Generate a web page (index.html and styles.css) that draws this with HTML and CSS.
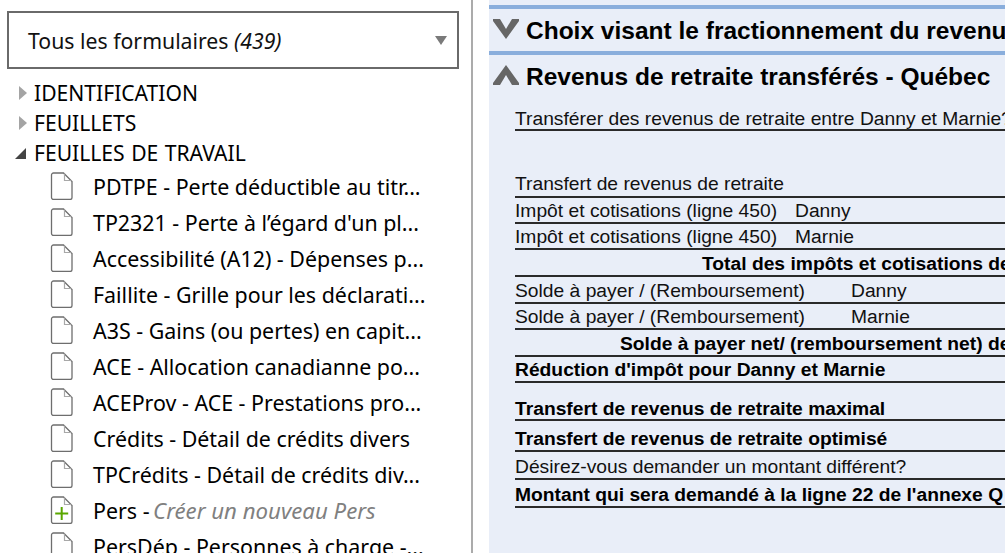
FILE: index.html
```html
<!DOCTYPE html>
<html lang="fr">
<head>
<meta charset="utf-8">
<title>Formulaires</title>
<link rel="stylesheet" href="styles.css">
</head>
<body>
<svg class="defs" width="0" height="0" aria-hidden="true">
  <symbol id="doc" viewBox="0 0 23 28">
    <path d="M1.500 3a2 2 0 0 1 2-2H13.500l8.500 8.500V25.500a2 2 0 0 1-2 2H3.500a2 2 0 0 1-2-2z" fill="#fff" stroke="#6e6e6e" stroke-width="1.3"/>
    <path d="M14.500 1.500V8.500H21.500" fill="none" stroke="#a8a8a8" stroke-width="1.2"/>
  </symbol>
</svg>
<div class="app">
  <aside class="side">
    <div class="select">
      <span>Tous les formulaires <em>(439)</em></span>
      <span class="select-arrow"></span>
    </div>
    <ul class="tree">
      <li class="group"><span class="tri tri-closed"></span>IDENTIFICATION</li>
      <li class="group"><span class="tri tri-closed"></span>FEUILLETS</li>
      <li class="group"><span class="tri tri-open"></span>FEUILLES DE TRAVAIL</li>
    </ul>
    <ul class="forms">
      <li class="form"><svg class="doc"><use href="#doc"/></svg><span>PDTPE - Perte déductible au titr...</span></li>
      <li class="form"><svg class="doc"><use href="#doc"/></svg><span>TP2321 - Perte à l’égard d'un pl...</span></li>
      <li class="form"><svg class="doc"><use href="#doc"/></svg><span>Accessibilité (A12) - Dépenses p...</span></li>
      <li class="form"><svg class="doc"><use href="#doc"/></svg><span>Faillite - Grille pour les déclarati...</span></li>
      <li class="form"><svg class="doc"><use href="#doc"/></svg><span>A3S - Gains (ou pertes) en capit...</span></li>
      <li class="form"><svg class="doc"><use href="#doc"/></svg><span>ACE - Allocation canadianne po...</span></li>
      <li class="form"><svg class="doc"><use href="#doc"/></svg><span>ACEProv - ACE - Prestations pro...</span></li>
      <li class="form"><svg class="doc"><use href="#doc"/></svg><span>Crédits - Détail de crédits divers</span></li>
      <li class="form"><svg class="doc"><use href="#doc"/></svg><span>TPCrédits - Détail de crédits div...</span></li>
      <li class="form"><svg class="doc" viewBox="0 0 23 28"><use href="#doc" width="23" height="28"/><path d="M11.700 11V24M5.200 17.500H18.200" stroke="#5aa700" stroke-width="2" fill="none"/></svg><span>Pers - <em class="new">Créer un nouveau Pers</em></span></li>
      <li class="form"><svg class="doc"><use href="#doc"/></svg><span>PersDép - Personnes à charge -...</span></li>
    </ul>
  </aside>
  <main class="main">
    <div class="panel">
      <h2 class="head head-first"><svg class="chev" viewBox="0 0 26 20"><path d="M0 0H7L13 10 19 0H26V2L13 20 0 2Z" fill="#666"/></svg>Choix visant le fractionnement du revenu de pension</h2>
      <h2 class="head"><svg class="chev" viewBox="0 0 26 20"><path d="M0 20V18L13 0 26 18V20H19L13 10 7 20Z" fill="#666"/></svg>Revenus de retraite transférés - Québec</h2>
      <div class="rows">
        <div class="row r1">Transférer des revenus de retraite entre Danny et Marnie?</div>
        <div class="row r2">Transfert de revenus de retraite</div>
        <div class="row"><span class="lbl-a">Impôt et cotisations (ligne 450)</span>Danny</div>
        <div class="row"><span class="lbl-a">Impôt et cotisations (ligne 450)</span>Marnie</div>
        <div class="row b tall c1">Total des impôts et cotisations de Danny et Marnie</div>
        <div class="row tall"><span class="lbl-b">Solde à payer / (Remboursement)</span>Danny</div>
        <div class="row"><span class="lbl-b">Solde à payer / (Remboursement)</span>Marnie</div>
        <div class="row b tall c2">Solde à payer net/ (remboursement net) de Danny et Marnie</div>
        <div class="row b">Réduction d'impôt pour Danny et Marnie</div>
        <div class="row b r3">Transfert de revenus de retraite maximal</div>
        <div class="row b r4">Transfert de revenus de retraite optimisé</div>
        <div class="row taller">Désirez-vous demander un montant différent?</div>
        <div class="row b taller">Montant qui sera demandé à la ligne 22 de l'annexe Q</div>
      </div>
    </div>
  </main>
</div>
</body>
</html>
```
FILE: styles.css
```css
* { box-sizing: border-box; }
html, body { margin: 0; height: 100%; overflow: hidden; background: #fff; }
ul { list-style: none; margin: 0; padding: 0; }
.defs { position: absolute; }
.app { display: flex; width: 1005px; height: 553px; overflow: hidden; }
.side {
  width: 473px; flex: none; padding: 11px 0 0 7px;
  border-right: 2px solid #ababab;
  font-family: "Noto Sans", sans-serif; font-size: 21.4px; color: #000;
  overflow: hidden;
}
.select {
  display: flex; align-items: center; justify-content: space-between;
  height: 58px; width: 452px; padding: 0 10px 0 19px;
  border: 2px solid #6a6a6a; color: #111; font-size: 21.25px;
}
.select-arrow {
  width: 0; height: 0; border-left: 6px solid transparent; border-right: 6px solid transparent;
  border-top: 9px solid #7a7a7a;
}
.tree { margin-top: 9px; padding-left: 27px; font-size: 21.1px; word-spacing: 1px; }
.group { position: relative; height: 30px; line-height: 30px; }
.tri { position: absolute; left: -15px; top: 8px; width: 0; height: 0; }
.tri-closed { border-left: 8px solid #a4a4a4; border-top: 7px solid transparent; border-bottom: 7px solid transparent; }
.tri-open { left: -19px; top: 10px; border-left: 11px solid transparent; border-bottom: 11px solid #444; }
.forms { padding-left: 43px; }
.form { display: flex; align-items: center; height: 36px; white-space: nowrap; }
.doc { width: 23px; height: 28px; margin-right: 20px; flex: none; }
.new { color: #808080; font-size: 22.2px; margin-left: -2px; }
.main { flex: 1; min-width: 0; padding-left: 16px; }
.panel { height: 100%; background: #e9eef8; padding-top: 5px; overflow: hidden; }
.head {
  display: flex; align-items: center; height: 46px; margin: 0;
  border-top: 4px solid #8aaedc; padding: 2px 0 0 4px;
  font: bold 24.5px/1 "Liberation Sans", sans-serif; color: #000; white-space: nowrap;
}
.chev { width: 26px; height: 20px; margin: -4px 7px 0 0; flex: none; }
.rows { padding-left: 26px; font: 19.25px/1 "Liberation Sans", sans-serif; color: #111; }
.row { height: 26px; border-bottom: 2px solid #2a2a2a; white-space: nowrap; padding-top: 3px; }
.b { font-weight: bold; color: #000; }
.r1 { height: 34px; padding-top: 12px; }
.r2 { margin-top: 41px; padding-top: 2px; }
.tall { height: 27px; padding-top: 4px; }
.taller { height: 28px; padding-top: 5px; }
.r3 { height: 30px; margin-top: 8px; padding-top: 8px; }
.r4 { height: 31px; padding-top: 8px; }
.lbl-a { display: inline-block; width: 280px; }
.lbl-b { display: inline-block; width: 336px; }
.c1 { padding-left: 187px; }
.c2 { padding-left: 105px; }
```
